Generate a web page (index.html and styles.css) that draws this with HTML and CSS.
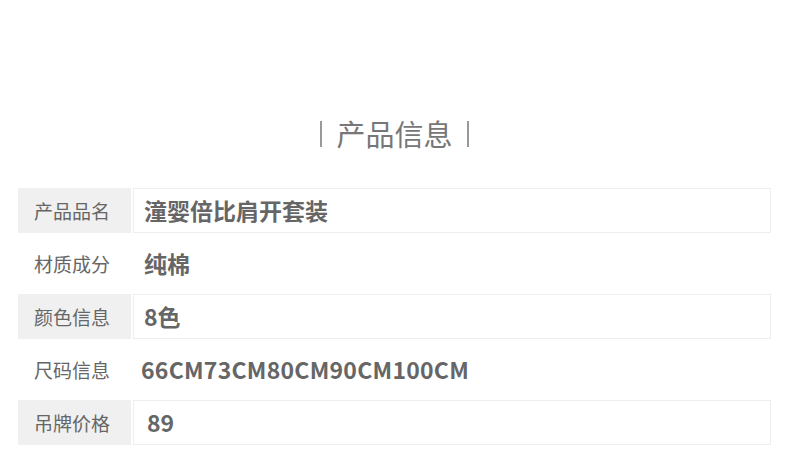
FILE: index.html
```html
<!DOCTYPE html>
<html lang="zh-CN">
<head>
  <meta charset="UTF-8">
  <meta name="viewport" content="width=device-width, initial-scale=1.0">
  <title>产品信息</title>
  <link rel="stylesheet" href="styles.css">
</head>
<body>
  <div class="container">
    <h2 class="title"><span class="bar"></span>产品信息<span class="bar"></span></h2>

    <div class="info">
      <div class="row boxed">
        <div class="label">产品品名</div>
        <div class="value">潼婴倍比肩开套装</div>
      </div>
      <div class="row">
        <div class="label">材质成分</div>
        <div class="value">纯棉</div>
      </div>
      <div class="row boxed">
        <div class="label">颜色信息</div>
        <div class="value">8色</div>
      </div>
      <div class="row">
        <div class="label">尺码信息</div>
        <div class="value size">66CM73CM80CM90CM100CM</div>
      </div>
      <div class="row boxed">
        <div class="label">吊牌价格</div>
        <div class="value price">89</div>
      </div>
    </div>
  </div>
</body>
</html>
```

FILE: styles.css
```css
body {
  margin: 0;
  padding: 0;
  background: #fff;
  font-family: "Noto Sans CJK SC", "Noto Sans", sans-serif;
  color: #666;
}

.container {
  padding: 112px 19px 0 18px;
}

.title {
  margin: 0 0 34px;
  height: 42px;
  line-height: 42px;
  text-align: center;
  font-size: 29px;
  font-weight: normal;
  color: #777;
  display: flex;
  justify-content: center;
  align-items: center;
}

.title .bar {
  display: inline-block;
  width: 2px;
  height: 26px;
  background: #999;
  margin: 2px 14px 0;
}

.info {
  display: flex;
  flex-direction: column;
  gap: 8px;
}

.row {
  display: flex;
  gap: 2px;
  height: 45px;
}

.label {
  width: 113px;
  box-sizing: border-box;
  padding-left: 16px;
  line-height: 45px;
  font-size: 19px;
  color: #666;
}

.boxed .label {
  background: #f0f0f0;
}

.value {
  flex: 1;
  box-sizing: border-box;
  padding-left: 10px;
  line-height: 43px;
  font-size: 23px;
  font-weight: bold;
  color: #666;
  border: 1px solid transparent;
}

.boxed .value {
  border-color: #eeeeee;
}

.value.size {
  padding-left: 7px;
  letter-spacing: 0.25px;
}

.value.price {
  padding-left: 13px;
}
```
